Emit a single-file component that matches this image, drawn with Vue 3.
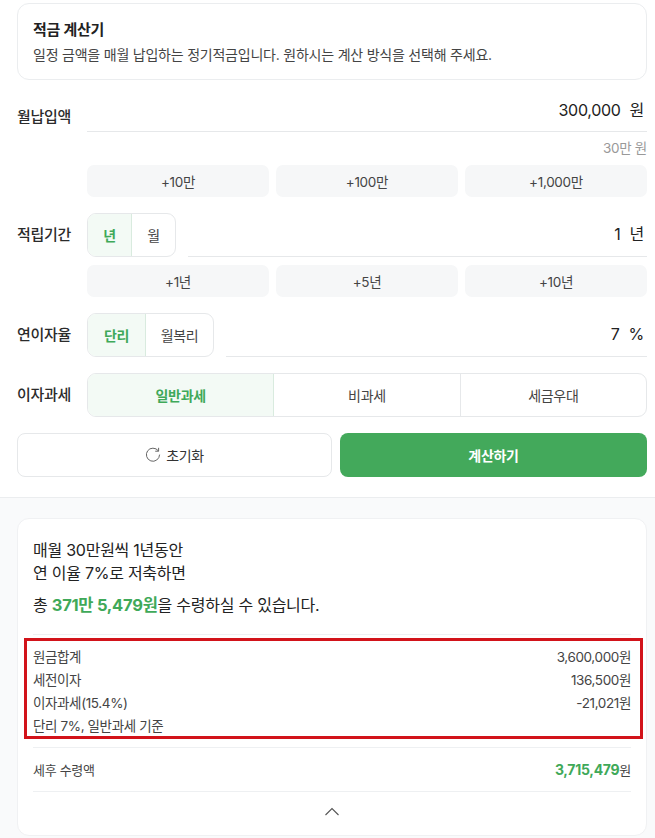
<script setup>
const monthlyAdds = ['+10만', '+100만', '+1,000만']
const periodAdds = ['+1년', '+5년', '+10년']
const taxTypes = ['일반과세', '비과세', '세금우대']
const details = [
  { label: '원금합계', value: '3,600,000원' },
  { label: '세전이자', value: '136,500원' },
  { label: '이자과세(15.4%)', value: '-21,021원' }
]
</script>

<template>
  <div class="page">
    <section class="form">
      <div class="intro">
        <h1>적금 계산기</h1>
        <p>일정 금액을 매월 납입하는 정기적금입니다. 원하시는 계산 방식을 선택해 주세요.</p>
      </div>

      <div class="row row-monthly">
        <span class="label">월납입액</span>
        <div class="field">
          <div class="input"><b>300,000</b><span>원</span></div>
        </div>
      </div>
      <div class="hint">30만 원</div>
      <div class="adds">
        <button v-for="a in monthlyAdds" :key="a">{{ a }}</button>
      </div>

      <div class="row row-period">
        <span class="label">적립기간</span>
        <div class="toggle">
          <span class="on narrow">년</span>
          <span class="narrow">월</span>
        </div>
        <div class="field">
          <div class="input low"><b>1</b><span>년</span></div>
        </div>
      </div>
      <div class="adds">
        <button v-for="a in periodAdds" :key="a">{{ a }}</button>
      </div>

      <div class="row row-rate">
        <span class="label">연이자율</span>
        <div class="toggle">
          <span class="on wide">단리</span>
          <span class="wide2">월복리</span>
        </div>
        <div class="field">
          <div class="input low"><b>7</b><span>%</span></div>
        </div>
      </div>

      <div class="row row-tax">
        <span class="label">이자과세</span>
        <div class="toggle full">
          <span v-for="(t, i) in taxTypes" :key="t" :class="{ on: i === 0 }">{{ t }}</span>
        </div>
      </div>

      <div class="actions">
        <button class="reset">
          <svg width="16" height="16" viewBox="0 0 16 16" fill="none" stroke="#666" stroke-width="1" stroke-linecap="round">
            <path d="M13.2 3.6A6.6 6.6 0 1 0 14.6 8" />
            <path d="M13.6 1.2v3h-3" stroke-linejoin="round" />
          </svg>
          초기화
        </button>
        <button class="submit">계산하기</button>
      </div>
    </section>

    <section class="result">
      <div class="card">
        <p class="summary">매월 30만원씩 1년동안<br />연 이율 7%로 저축하면</p>
        <p class="total">총 <strong>371만 5,479원</strong>을 수령하실 수 있습니다.</p>
        <hr class="first" />
        <div class="details">
          <div v-for="d in details" :key="d.label" class="detail">
            <span>{{ d.label }}</span>
            <span>{{ d.value }}</span>
          </div>
          <div class="detail">단리 7%, 일반과세 기준</div>
        </div>
        <hr />
        <div class="after-tax">
          <span>세후 수령액</span>
          <span><strong>3,715,479</strong>원</span>
        </div>
        <hr />
        <div class="more">
          <svg width="16" height="9" viewBox="0 0 16 9" fill="none" stroke="#555" stroke-width="1.1">
            <path d="M1.5 8 8 1.5 14.5 8" />
          </svg>
        </div>
      </div>
    </section>
  </div>
</template>

<style>
body {
  background: #fff;
}
</style>

<style scoped>
.page {
  width: 655px;
  height: 838px;
  overflow: hidden;
  font-family: Inter, "Noto Sans CJK KR", sans-serif;
  letter-spacing: -0.3px;
  color: #222;
  background: #fff;
}

.form {
  padding: 3px 8px 20px 17px;
  border-bottom: 1px solid #ebedef;
}

.intro {
  height: 77px;
  box-sizing: border-box;
  padding: 15px 15px 0;
  border: 1px solid #ebedef;
  border-radius: 12px;
}

.intro h1 {
  margin: 0;
  font-size: 15px;
  font-weight: 600;
  line-height: 22px;
}

.intro p {
  margin: 3px 0 0;
  font-size: 14px;
  line-height: 22px;
  letter-spacing: -0.22px;
  color: #444;
}

.row {
  display: flex;
  align-items: center;
}

.label {
  flex: 0 0 70px;
  font-size: 15px;
  font-weight: 500;
  line-height: 22px;
  color: #2b2b2b;
}

.row-monthly {
  margin-top: 19px;
  height: 33px;
}

.row-monthly .label {
  padding-top: 2px;
}

.row-period {
  margin-top: 16px;
  height: 44px;
}

.row-rate {
  margin-top: 16px;
  height: 44px;
}

.row-tax {
  margin-top: 16px;
  height: 44px;
}

.field {
  flex: 1;
  align-self: stretch;
  border-bottom: 1px solid #e6e8ea;
  display: flex;
}

.toggle + .field {
  margin-left: 12px;
}

.input {
  flex: 1;
  display: flex;
  justify-content: flex-end;
  align-items: flex-start;
  gap: 9px;
  padding-right: 3px;
  font-size: 16px;
  line-height: 22px;
}

.input.low {
  padding-top: 10px;
}

.input b {
  font-weight: 400;
}

.hint {
  margin-top: 7px;
  text-align: right;
  font-size: 13.5px;
  line-height: 18px;
  color: #999;
}

.adds {
  display: grid;
  grid-template-columns: repeat(3, 1fr);
  gap: 7px;
  margin: 8px 0 0 70px;
}

.adds button {
  height: 32px;
  padding: 0 0 1px;
  border: 0;
  border-radius: 7px;
  background: #f6f7f8;
  font: inherit;
  font-size: 13.5px;
  letter-spacing: -0.3px;
  color: #444;
}

.toggle {
  display: flex;
  height: 44px;
  box-sizing: border-box;
  border: 1px solid #e6e8ea;
  border-radius: 9px;
  overflow: hidden;
  font-size: 14px;
  color: #444;
}

.toggle span {
  display: flex;
  align-items: center;
  justify-content: center;
  border-left: 1px solid #e6e8ea;
}

.toggle span:first-child {
  border-left: 0;
}

.toggle .on {
  background: #f3faf5;
  border-right: 1px solid #d9ebdf;
  color: #3fa959;
  font-weight: 600;
}

.toggle .on + span {
  border-left: 0;
}

.narrow {
  width: 43px;
}

.wide {
  width: 57px;
}

.wide2 {
  width: 67px;
}

.toggle.full {
  flex: 1;
}

.toggle.full span {
  flex: 1;
}

.actions {
  display: flex;
  gap: 8px;
  margin-top: 16px;
}

.actions button {
  height: 44px;
  border-radius: 8px;
  font: inherit;
  font-size: 14px;
  letter-spacing: -0.3px;
}

.reset {
  flex: 0 0 315px;
  display: flex;
  align-items: center;
  justify-content: center;
  gap: 5px;
  background: #fff;
  border: 1px solid #e6e8ea;
  color: #333;
}

.submit {
  flex: 1;
  border: 0;
  background: #43a95b;
  color: #fff;
  font-weight: 600 !important;
}

.result {
  height: 341px;
  padding: 20px 8px 0 17px;
  background: #f9fafb;
}

.card {
  height: 318px;
  box-sizing: border-box;
  padding: 20px 15px 0;
  background: #fff;
  border: 1px solid #f0f1f3;
  border-radius: 12px;
}

.summary {
  margin: 0;
  font-size: 16px;
  line-height: 23px;
  letter-spacing: -0.25px;
}

.total {
  margin: 9px 0 0;
  font-size: 16px;
  line-height: 23px;
  letter-spacing: -0.25px;
}

.total strong {
  font-size: 16.5px;
}

.total strong,
.after-tax strong {
  color: #3fa959;
  font-weight: 700;
}

hr {
  margin: 0;
  border: 0;
  border-top: 1px solid #eef0f2;
}

hr.first {
  margin-top: 17px;
}

.details {
  margin: 3px -12px 8px -9px;
  padding: 5px 9px 0 6px;
  height: 101px;
  box-sizing: border-box;
  border: 3px solid #d2131a;
  font-size: 13.5px;
  letter-spacing: -0.38px;
  color: #444;
}

.detail {
  display: flex;
  justify-content: space-between;
  height: 23px;
  line-height: 23px;
}

.after-tax {
  display: flex;
  justify-content: space-between;
  align-items: center;
  height: 43px;
  font-size: 13px;
  color: #444;
}

.after-tax strong {
  font-size: 14px;
}

.more {
  display: flex;
  justify-content: center;
  padding-top: 15px;
}
</style>
